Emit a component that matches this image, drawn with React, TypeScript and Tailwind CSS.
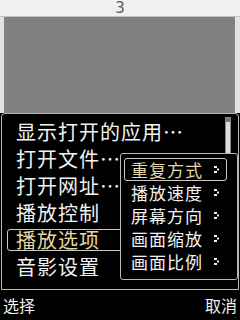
import React from "react";

function Arrow() {
  return (
    <svg width="6" height="7" viewBox="0 0 6 7" className="block">
      <rect x="0" y="0" width="3" height="2" fill="#f0f0f0" />
      <rect x="3" y="2.5" width="2" height="2" fill="#f0f0f0" />
      <rect x="0" y="5" width="3" height="2" fill="#f0f0f0" />
    </svg>
  );
}

const mainItems = ["显示打开的应用…", "打开文件…", "打开网址…", "播放控制", "播放选项", "音影设置"];
const subItems = ["重复方式", "播放速度", "屏幕方向", "画面缩放", "画面比例"];

export default function App() {
  return (
    <div className="w-[240px] h-[320px] flex flex-col bg-black overflow-hidden font-['Noto_Sans_CJK_SC','Noto_Sans',sans-serif]">
      <div className="h-[17px] bg-[#f0f0f0] border-b border-[#c4c4c4] flex items-center justify-center text-[15px] leading-none text-[#5a5a5a] font-['DejaVu_Sans',sans-serif]">
        3
      </div>
      <div className="h-[96px] flex bg-[#e2e2e2] pl-[4px] pr-[5px]">
        <div className="flex-1 bg-[#808080]" />
      </div>
      <div className="relative flex-1 flex flex-col bg-black">
        <div className="relative mx-[1px] h-[177px] border border-[#b8b8b8] rounded-t-[4px] pt-[4px]">
          {mainItems.map((t, i) =>
            i === 4 ? (
              <div key={t} className="h-[27px] flex items-center">
                <div className="ml-[5px] h-[22px] w-[150px] border border-[#c8c8c8] rounded-[3px] flex items-center pl-[8px] text-[20px] leading-none tracking-[1px] text-[#e6d6a8]">
                  {t}
                </div>
              </div>
            ) : (
              <div key={t} className="h-[27px] flex items-center pl-[14px] text-[20px] leading-none tracking-[1px] text-[#f2f2f2]">
                {t}
              </div>
            )
          )}
          <div className="absolute left-[223px] top-[3px] w-[6px] h-[70px] bg-[#dcdcdc] border border-[#8a8a8a] flex flex-col items-center">
            <div className="w-[4px] h-[4px] bg-[#777]" />
          </div>
        </div>
        <div className="absolute left-[120px] top-[40px] w-[118px] h-[127px] bg-black border border-[#b8b8b8] rounded-[3px] pt-[4px]">
          {subItems.map((t, i) => (
            <div
              key={t}
              className={
                "ml-[3px] w-[103px] h-[23px] flex items-center justify-between pl-[6px] pr-[6px] rounded-[3px] border " +
                (i === 0 ? "border-[#c8c8c8] text-[#e6d6a8]" : "border-transparent text-[#f2f2f2]")
              }
            >
              <span className="text-[17px] leading-none tracking-[1px]">{t}</span>
              <Arrow />
            </div>
          ))}
        </div>
        <div className="flex-1 flex items-center justify-between px-[3px] text-[16px] leading-none text-[#f2f2f2]">
          <span>选择</span>
          <span>取消</span>
        </div>
      </div>
    </div>
  );
}
